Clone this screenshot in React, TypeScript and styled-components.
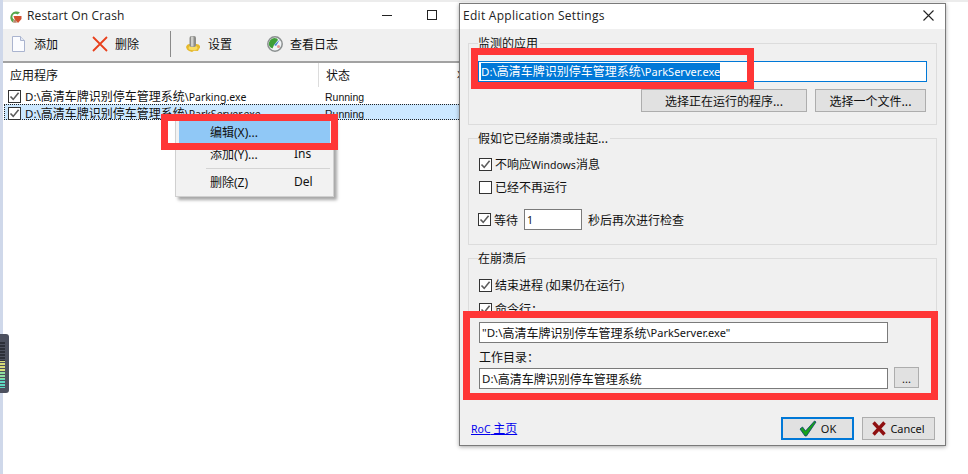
import styled, { createGlobalStyle } from 'styled-components';

const Global = createGlobalStyle`
  html, body {
    margin: 0;
    padding: 0;
    background: #fff;
  }
  * {
    box-sizing: border-box;
  }
`;

const cjk = `'Noto Sans CJK SC', sans-serif`;

const Desktop = styled.div`
  position: relative;
  width: 968px;
  height: 474px;
  overflow: hidden;
  background: #fff;
  color: #111;
  font: 12px/16px ${cjk};
`;

const TopEdge = styled.div`
  position: absolute;
  left: 0;
  top: 0;
  width: 968px;
  height: 2px;
  background: #ececec;
`;

const LeftEdge = styled.div`
  position: absolute;
  left: 0;
  top: 0;
  width: 3px;
  height: 474px;
  background: #cfd8ea;
`;

const Latin = styled.span<{ $s?: number }>`
  font-family: 'Noto Sans', sans-serif;
  font-size: ${(p) => p.$s ?? 10.5}px;
`;

const Status = styled.span`
  font-family: 'Liberation Sans', sans-serif;
  font-size: 10.5px;
`;

/* ---- main window ---- */

const MainWindow = styled.div`
  position: absolute;
  left: 3px;
  top: 3px;
  width: 460px;
  height: 471px;
  background: #fff;
`;

const TitleBar = styled.div`
  display: flex;
  align-items: center;
  height: 26px;
  padding-left: 5px;
  background: #fff;
`;

const AppTitle = styled.div`
  margin-left: 5px;
  font: 12px/16px 'Open Sans', sans-serif;
  letter-spacing: 0.15px;
  color: #222;
`;

const Toolbar = styled.div`
  display: flex;
  align-items: center;
  height: 34px;
  padding-bottom: 2px;
  background: #f0f0f0;
  border-bottom: 2px solid #a2a2a2;
`;

const ToolButton = styled.div<{ $w: number }>`
  display: flex;
  align-items: center;
  gap: 7px;
  width: ${(p) => p.$w}px;
  padding-left: 8px;
`;

const ToolSep = styled.div`
  width: 1px;
  height: 26px;
  margin: 0 6px 0 2px;
  background: #8a8a8a;
`;

const WinControls = styled.div`
  display: flex;
  align-items: center;
  margin: -2px 26px 0 auto;
  gap: 35px;
`;

const MinIcon = styled.div`
  width: 10px;
  height: 1px;
  background: #222;
`;

const MaxIcon = styled.div`
  width: 10px;
  height: 10px;
  border: 1px solid #222;
`;

const ListHeader = styled.div`
  display: flex;
  align-items: center;
  height: 24px;
`;

const HeaderCell = styled.div<{ $w: number; $line?: boolean }>`
  display: flex;
  flex: none;
  align-items: center;
  height: 24px;
  width: ${(p) => p.$w}px;
  padding-left: 7px;
  border-right: ${(p) => (p.$line ? '1px solid #dcdcdc' : 'none')};
`;

const Row = styled.div<{ $selected?: boolean }>`
  display: grid;
  grid-template-columns: 320px 1fr;
  align-items: center;
  height: 16px;
  margin: 0 0 1px 1px;
  background: ${(p) => (p.$selected ? '#cce8ff' : 'transparent')};
  border: 1px dotted ${(p) => (p.$selected ? '#222' : 'transparent')};
  white-space: nowrap;
`;

const RowName = styled.div`
  display: flex;
  align-items: center;
  gap: 4px;
  padding-left: 3px;
`;

const Check = styled.span`
  display: inline-flex;
  align-items: center;
  justify-content: center;
  flex: none;
  width: 13px;
  height: 13px;
  background: #fff;
  border: 1px solid #333;
`;

const CheckMark = () => (
  <svg width='11' height='11' viewBox='0 0 11 11'>
    <path d='M1.5 5.5 L4.2 8.4 L9.6 1.8' fill='none' stroke='#5c5c5c' strokeWidth='1.6' />
  </svg>
);

/* ---- context menu ---- */

const Menu = styled.div`
  position: absolute;
  left: 175px;
  top: 119px;
  width: 159px;
  height: 78px;
  padding: 1px 3px 0 3px;
  background: #f2f2f2;
  border: 1px solid #d0d0d0;
  box-shadow: 3px 3px 3px rgba(0, 0, 0, 0.35);
`;

const MenuItem = styled.div<{ $active?: boolean }>`
  display: grid;
  grid-template-columns: 84px 1fr;
  align-items: center;
  height: 22px;
  padding-left: 31px;
  background: ${(p) => (p.$active ? '#90c8f6' : 'transparent')};
`;

const MenuSep = styled.div`
  height: 1px;
  margin: 3px 0 2px 27px;
  background: #d4d4d4;
`;

/* ---- settings dialog ---- */

const Dialog = styled.div`
  position: absolute;
  left: 459px;
  top: 3px;
  width: 487px;
  height: 443px;
  background: #f0f0f0;
  border: 1px solid #7a7a7a;
  box-shadow: 0 1px 4px rgba(0, 0, 0, 0.35);
`;

const DialogTitle = styled.div`
  display: flex;
  align-items: center;
  justify-content: space-between;
  height: 25px;
  padding: 0 11px 2px 3px;
  background: #fff;
  font: 12px/16px 'Open Sans', sans-serif;
  letter-spacing: 0.28px;
  color: #222;
`;

const DialogBody = styled.div`
  display: flex;
  flex-direction: column;
  padding: 6px 8px 0 8px;
  gap: 5px;
`;

const Group = styled.fieldset<{ $h: number }>`
  height: ${(p) => p.$h}px;
  min-width: 0;
  margin: 0;
  padding: 0 9px;
  border: 1px solid #dcdcdc;
`;

const Legend = styled.legend`
  padding: 0 2px 0 0;
  line-height: 16px;
`;

const Field = styled.div<{ $w?: number; $focus?: boolean }>`
  display: flex;
  align-items: center;
  width: ${(p) => (p.$w ? `${p.$w}px` : '100%')};
  height: 21px;
  margin-top: ${(p) => (p.$focus ? 10 : 0)}px;
  padding-left: 2px;
  background: #fff;
  border: 1px solid ${(p) => (p.$focus ? '#0078d7' : '#7a7a7a')};
  white-space: nowrap;
`;

const Selected = styled.span`
  background: #0078d7;
  color: #fff;
`;

const Button = styled.div<{ $w: number; $h?: number; $default?: boolean }>`
  display: flex;
  align-items: center;
  justify-content: center;
  gap: 4px;
  flex: none;
  width: ${(p) => p.$w}px;
  height: ${(p) => p.$h ?? 23}px;
  background: #e1e1e1;
  border: ${(p) => (p.$default ? '2px solid #0078d7' : '1px solid #adadad')};
`;

const ButtonRow = styled.div<{ $flush?: boolean }>`
  display: flex;
  justify-content: flex-end;
  gap: 8px;
  margin: ${(p) => (p.$flush ? '0' : '7px 1px 0 0')};
`;

const CheckRow = styled.div<{ $mt: number }>`
  display: flex;
  align-items: center;
  gap: 3px;
  height: 16px;
  margin-top: ${(p) => p.$mt}px;
  padding-left: 1px;
`;

const WaitRow = styled.div`
  display: flex;
  align-items: center;
  height: 21px;
  margin-top: 14px;
`;

const WaitLabel = styled.span`
  margin: 0 6px 0 3px;
`;

const WaitSuffix = styled.span`
  margin-left: 6px;
`;

const FieldRow = styled.div<{ $mt?: number }>`
  display: flex;
  align-items: flex-start;
  gap: 6px;
  margin-top: ${(p) => p.$mt ?? 0}px;
  padding-left: 1px;
`;

const Label = styled.div`
  height: 16px;
  margin: 6px 0 3px 1px;
`;

const Footer = styled.div`
  display: flex;
  align-items: center;
  justify-content: space-between;
  margin-top: 16px;
  padding: 0 2px 0 3px;
`;

const HomeLink = styled.a`
  color: #0000ee;
  text-decoration: underline;
  cursor: pointer;
`;

const EllipsisButton = styled(Button)`
  align-items: flex-end;
  margin-top: -1px;
  font: 11px/16px 'Noto Sans', sans-serif;
`;

/* ---- overlays ---- */

const RedBox = styled.div<{ $x: number; $y: number; $w: number; $h: number }>`
  position: absolute;
  left: ${(p) => p.$x}px;
  top: ${(p) => p.$y}px;
  width: ${(p) => p.$w}px;
  height: ${(p) => p.$h}px;
  border: 7px solid #ff3636;
`;

const Widget = styled.div`
  position: absolute;
  left: 0;
  top: 334px;
  width: 9px;
  height: 59px;
  padding-top: 8px;
  background: #4c505e;
  border-radius: 0 3px 3px 0;
`;

const WidgetBars = styled.div`
  width: 5px;
  height: 46px;
  background: repeating-linear-gradient(
      to bottom,
      transparent 0 2px,
      #4c505e 2px 3px
    ),
    linear-gradient(
      to bottom,
      #2c2f38 0 42%,
      #d8dc78 42% 62%,
      #8fdca0 62% 80%,
      #5cd8c0 80% 100%
    );
`;

const AppIcon = () => (
  <svg width='14' height='15' viewBox='0 0 14 15'>
    <path d='M12 3.5 A6 6 0 1 0 5 13.6 L6 10.4 A3 3 0 1 1 9.5 5.6 Z' fill='#58a64c' />
    <path d='M5 13.6 A6 6 0 0 0 9 13.4 L7.6 10.6 A3 3 0 0 1 6 10.4 Z' fill='#b98a72' />
    <path d='M5.5 7 L13.5 7 L13.5 10 L10 14 L6.5 10 Z' fill='#d2512e' />
  </svg>
);

const DocIcon = () => (
  <svg width='16' height='18' viewBox='0 0 16 18'>
    <path d='M1.5 1.5 H9.5 L13.5 5.5 V16.5 H1.5 Z' fill='#fbfcff' stroke='#aab4cf' />
    <path d='M9.5 1.5 V5.5 H13.5' fill='#e4e9f4' stroke='#aab4cf' />
  </svg>
);

const CrossIcon = () => (
  <svg width='16' height='16' viewBox='0 0 16 16'>
    <path d='M1 1 L15 15 M15 1 L1 15' stroke='#e8401c' strokeWidth='1.8' />
  </svg>
);

const GearIcon = () => (
  <svg width='16' height='18' viewBox='0 0 16 18'>
    <path
      d='M1 12 Q2 9 4.5 9 H11.5 Q14 9 15 11 Q15.5 13 14 14 L13 16 L9 15.8 L7 17 L4 16 L2 14.5 Z'
      fill='#e6b92c'
    />
    <ellipse cx='8' cy='13' rx='4.5' ry='2.2' fill='#f8dc62' />
    <rect x='4.5' y='1' width='6.5' height='11' rx='2' fill='#8d8d8a' />
    <rect x='6' y='1.5' width='2.5' height='10' fill='#cfcfcb' />
  </svg>
);

const LogIcon = () => (
  <svg width='16' height='16' viewBox='0 0 16 16'>
    <circle cx='8' cy='8' r='7.2' fill='#f1f4f6' stroke='#8a8f8f' strokeWidth='1.5' />
    <path d='M10 2.6 A5.6 5.6 0 0 0 3.6 11.6 L5.5 12.5 L7 9 L11 4 Z' fill='#3f9e38' />
    <path d='M13 3.5 L7 9 L9 10 Z' fill='#4a86d0' />
    <circle cx='11.5' cy='10.5' r='1.5' fill='#e59a9a' />
  </svg>
);

const OkIcon = () => (
  <svg width='18' height='17' viewBox='0 0 18 17'>
    <path
      d='M1 9 L3.5 7 L6.5 11 L15.5 1 L17 2 L7.5 16 L6 16 Z'
      fill='#17a11a'
      stroke='#0b3d6e'
      strokeWidth='0.8'
    />
  </svg>
);

const CancelIcon = () => (
  <svg width='14' height='15' viewBox='0 0 14 15'>
    <path d='M1.5 1.5 L12.5 13.5 M12.5 1.5 L1.5 13.5' stroke='#8e0f10' strokeWidth='3.4' />
  </svg>
);

const CloseIcon = () => (
  <svg width='11' height='11' viewBox='0 0 11 11'>
    <path d='M0.5 0.5 L10.5 10.5 M10.5 0.5 L0.5 10.5' stroke='#222' strokeWidth='1.1' />
  </svg>
);

const App = () => {
  return (
    <Desktop>
      <Global />
      <TopEdge />
      <LeftEdge />

      <MainWindow>
        <TitleBar>
          <AppIcon />
          <AppTitle>Restart On Crash</AppTitle>
          <WinControls>
            <MinIcon />
            <MaxIcon />
          </WinControls>
        </TitleBar>
        <Toolbar>
          <ToolButton $w={81}>
            <DocIcon />
            添加
          </ToolButton>
          <ToolButton $w={84}>
            <CrossIcon />
            删除
          </ToolButton>
          <ToolSep />
          <ToolButton $w={82}>
            <GearIcon />
            设置
          </ToolButton>
          <ToolButton $w={90}>
            <LogIcon />
            查看日志
          </ToolButton>
        </Toolbar>
        <ListHeader>
          <HeaderCell $w={316} $line>
            应用程序
          </HeaderCell>
          <HeaderCell $w={131}>状态</HeaderCell>
          <HeaderCell $w={13}>状</HeaderCell>
        </ListHeader>
        <Row>
          <RowName>
            <Check>
              <CheckMark />
            </Check>
            <span>
              <Latin $s={11.5}>D:\</Latin>高清车牌识别停车管理系统<Latin>\Parking.exe</Latin>
            </span>
          </RowName>
          <Status>Running</Status>
        </Row>
        <Row $selected>
          <RowName>
            <Check>
              <CheckMark />
            </Check>
            <span>
              <Latin $s={11.5}>D:\</Latin>高清车牌识别停车管理系统<Latin>\ParkServer.exe</Latin>
            </span>
          </RowName>
          <Status>Running</Status>
        </Row>
      </MainWindow>

      <Menu>
        <MenuItem $active>
          <span>
            编辑<Latin $s={12}>(X)...</Latin>
          </span>
        </MenuItem>
        <MenuItem>
          <span>
            添加<Latin $s={12}>(Y)...</Latin>
          </span>
          <Latin $s={12}>Ins</Latin>
        </MenuItem>
        <MenuSep />
        <MenuItem>
          <span>
            删除<Latin $s={12}>(Z)</Latin>
          </span>
          <Latin $s={12}>Del</Latin>
        </MenuItem>
      </Menu>

      <Dialog>
        <DialogTitle>
          Edit Application Settings
          <CloseIcon />
        </DialogTitle>
        <DialogBody>
          <Group $h={90}>
            <Legend>监测的应用</Legend>
            <Field $focus>
              <Selected>
                <Latin $s={11.5}>D:\</Latin>高清车牌识别停车管理系统<Latin $s={11}>\ParkServer.exe</Latin>
              </Selected>
            </Field>
            <ButtonRow>
              <Button $w={166}>选择正在运行的程序...</Button>
              <Button $w={111}>选择一个文件...</Button>
            </ButtonRow>
          </Group>

          <Group $h={115}>
            <Legend>假如它已经崩溃或挂起...</Legend>
            <CheckRow $mt={10}>
              <Check>
                <CheckMark />
              </Check>
              <span>
                不响应<Latin>Windows</Latin>消息
              </span>
            </CheckRow>
            <CheckRow $mt={7}>
              <Check />
              已经不再运行
            </CheckRow>
            <WaitRow>
              <Check>
                <CheckMark />
              </Check>
              <WaitLabel>等待</WaitLabel>
              <Field $w={58}>
                <Latin>1</Latin>
              </Field>
              <WaitSuffix>秒后再次进行检查</WaitSuffix>
            </WaitRow>
          </Group>

          <Group $h={146}>
            <Legend>在崩溃后</Legend>
            <CheckRow $mt={11}>
              <Check>
                <CheckMark />
              </Check>
              <span>
                结束进程 <Latin>(</Latin>如果仍在运行<Latin>)</Latin>
              </span>
            </CheckRow>
            <CheckRow $mt={8}>
              <Check>
                <CheckMark />
              </Check>
              命令行：
            </CheckRow>
            <FieldRow $mt={5}>
              <Field $w={409}>
                <Latin $s={11.5}>"D:\</Latin>高清车牌识别停车管理系统<Latin $s={11}>\ParkServer.exe"</Latin>
              </Field>
            </FieldRow>
            <Label>工作目录：</Label>
            <FieldRow>
              <Field $w={409}>
                <Latin $s={11.5}>D:\</Latin>高清车牌识别停车管理系统
              </Field>
              <EllipsisButton $w={25} $h={21}>
                ...
              </EllipsisButton>
            </FieldRow>
          </Group>

          <Footer>
            <HomeLink>
              <Latin>RoC</Latin> 主页
            </HomeLink>
            <ButtonRow $flush>
              <Button $w={73} $default>
                <OkIcon />
                <Latin $s={11}>OK</Latin>
              </Button>
              <Button $w={73}>
                <CancelIcon />
                <Latin $s={11}>Cancel</Latin>
              </Button>
            </ButtonRow>
          </Footer>
        </DialogBody>
      </Dialog>

      <RedBox $x={161} $y={114} $w={177} $h={36} />
      <RedBox $x={471} $y={48} $w={283} $h={41} />
      <RedBox $x={463} $y={311} $w={475} $h={89} />

      <Widget>
        <WidgetBars />
      </Widget>
    </Desktop>
  );
};

export default App;
